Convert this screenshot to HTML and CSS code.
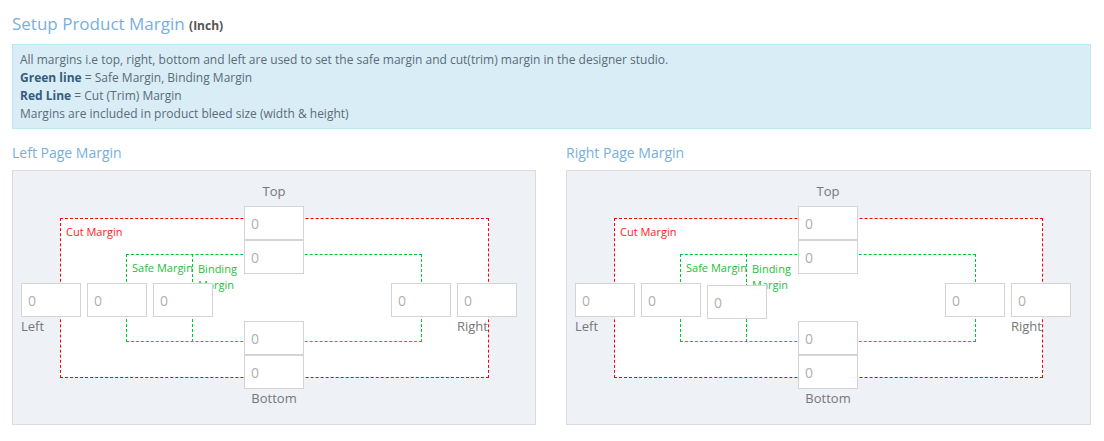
FILE: index.html
```html
<!DOCTYPE html>
<html lang="en">
<head>
    <meta charset="UTF-8">
    <meta name="viewport" content="width=device-width, initial-scale=1.0">
    <title>Setup Product Margin</title>
    <link rel="stylesheet" href="styles.css">
</head>
<body>
    <div class="container">
        <h2 class="page-title">Setup Product Margin <small>(Inch)</small></h2>

        <div class="alert-info">
            All margins i.e top, right, bottom and left are used to set the safe margin and cut(trim) margin in the designer studio.<br>
            <b>Green line</b> = Safe Margin, Binding Margin<br>
            <b>Red Line</b> = Cut (Trim) Margin<br>
            Margins are included in product bleed size (width &amp; height)
        </div>

        <div class="columns">
            <div class="column">
                <h4 class="section-title">Left Page Margin</h4>
                <div class="margin-panel">
                    <div class="cut-box"></div>
                    <div class="safe-box"></div>
                    <div class="binding-line"></div>
                    <span class="cut-label">Cut Margin</span>
                    <span class="safe-label">Safe Margin</span>
                    <span class="binding-label">Binding Margin</span>

                    <span class="side-label top-label">Top</span>
                    <input class="margin-input top-cut" type="text" placeholder="0">
                    <input class="margin-input top-safe" type="text" placeholder="0">
                    <input class="margin-input left-cut" type="text" placeholder="0">
                    <input class="margin-input left-safe" type="text" placeholder="0">
                    <input class="margin-input binding" type="text" placeholder="0">
                    <input class="margin-input right-safe" type="text" placeholder="0">
                    <input class="margin-input right-cut" type="text" placeholder="0">
                    <span class="side-label left-label">Left</span>
                    <span class="side-label right-label">Right</span>
                    <input class="margin-input bottom-safe" type="text" placeholder="0">
                    <input class="margin-input bottom-cut" type="text" placeholder="0">
                    <span class="side-label bottom-label">Bottom</span>
                </div>
            </div>

            <div class="column">
                <h4 class="section-title">Right Page Margin</h4>
                <div class="margin-panel">
                    <div class="cut-box"></div>
                    <div class="safe-box"></div>
                    <div class="binding-line"></div>
                    <span class="cut-label">Cut Margin</span>
                    <span class="safe-label">Safe Margin</span>
                    <span class="binding-label">Binding Margin</span>

                    <span class="side-label top-label">Top</span>
                    <input class="margin-input top-cut" type="text" placeholder="0">
                    <input class="margin-input top-safe" type="text" placeholder="0">
                    <input class="margin-input left-cut" type="text" placeholder="0">
                    <input class="margin-input left-safe" type="text" placeholder="0">
                    <input class="margin-input binding binding-low" type="text" placeholder="0">
                    <input class="margin-input right-safe" type="text" placeholder="0">
                    <input class="margin-input right-cut" type="text" placeholder="0">
                    <span class="side-label left-label">Left</span>
                    <span class="side-label right-label">Right</span>
                    <input class="margin-input bottom-safe" type="text" placeholder="0">
                    <input class="margin-input bottom-cut" type="text" placeholder="0">
                    <span class="side-label bottom-label">Bottom</span>
                </div>
            </div>
        </div>
    </div>
</body>
</html>
```

FILE: styles.css
```css
body {
    margin: 0;
    font-family: "Open Sans", "DejaVu Sans", sans-serif;
    background-color: #ffffff;
    color: #555;
}
.container {
    width: 1079px;
    padding: 0 13px 0 12px;
}
.page-title {
    margin: 12px 0 6px;
    font-size: 17px;
    font-weight: normal;
    line-height: 24px;
    color: #77afe0;
}
.page-title small {
    font-size: 12px;
    font-weight: bold;
    color: #555;
}
.alert-info {
    background-color: #d9edf7;
    border: 1px solid #bce8f1;
    padding: 6px 7px 5px;
    font-size: 12px;
    line-height: 18px;
    color: #5b6b78;
}
.alert-info b {
    color: #365c7c;
}
.columns {
    display: grid;
    grid-template-columns: 524px 525px;
    column-gap: 30px;
}
.section-title {
    margin: 14px 0 7px;
    font-size: 14px;
    font-weight: normal;
    line-height: 20px;
    color: #77afe0;
}
.margin-panel {
    position: relative;
    height: 253px;
    border: 1px solid #dcdcdc;
    background-color: #eef1f6;
}

/* diagram lines */
.cut-box {
    position: absolute;
    left: 47px;
    top: 47px;
    width: 429px;
    height: 160px;
    box-sizing: border-box;
    border: 1px dashed #ff0000;
    background-color: #ffffff;
}
.safe-box {
    position: absolute;
    left: 113px;
    top: 83px;
    width: 296px;
    height: 88px;
    box-sizing: border-box;
    border: 1px dashed #00c832;
}
.binding-line {
    position: absolute;
    left: 179px;
    top: 83px;
    height: 88px;
    border-left: 1px dashed #00c832;
}
.cut-label,
.safe-label,
.binding-label {
    position: absolute;
    font-size: 11px;
    line-height: 14px;
}
.cut-label {
    left: 53px;
    top: 54px;
    color: #ff2020;
}
.safe-label {
    left: 119px;
    top: 90px;
    color: #1fc03a;
}
.binding-label {
    left: 185px;
    top: 90px;
    width: 44px;
    line-height: 16px;
    color: #1fc03a;
}

/* inputs */
.margin-input {
    position: absolute;
    z-index: 1;
    width: 60px;
    height: 34px;
    box-sizing: border-box;
    margin: 0;
    padding: 0 6px;
    border: 1px solid #d4d4d4;
    background-color: #ffffff;
    font-family: "Open Sans", "DejaVu Sans", sans-serif;
    font-size: 14px;
    color: #555;
    outline: none;
}
.margin-input::placeholder {
    color: #b0b0b0;
}
.top-cut { left: 231px; top: 35px; }
.top-safe { left: 231px; top: 69px; }
.left-cut { left: 8px; top: 112px; }
.left-safe { left: 74px; top: 112px; }
.binding { left: 140px; top: 112px; }
.binding-low { top: 114px; }
.right-safe { left: 378px; top: 112px; }
.right-cut { left: 444px; top: 112px; }
.bottom-safe { left: 231px; top: 150px; }
.bottom-cut { left: 231px; top: 184px; }

/* side labels */
.side-label {
    position: absolute;
    z-index: 2;
    font-size: 13px;
    line-height: 18px;
    color: #777;
}
.top-label {
    left: 231px;
    top: 11px;
    width: 60px;
    text-align: center;
}
.left-label {
    left: 8px;
    top: 146px;
}
.right-label {
    left: 444px;
    top: 146px;
}
.bottom-label {
    left: 231px;
    top: 218px;
    width: 60px;
    text-align: center;
}
```
